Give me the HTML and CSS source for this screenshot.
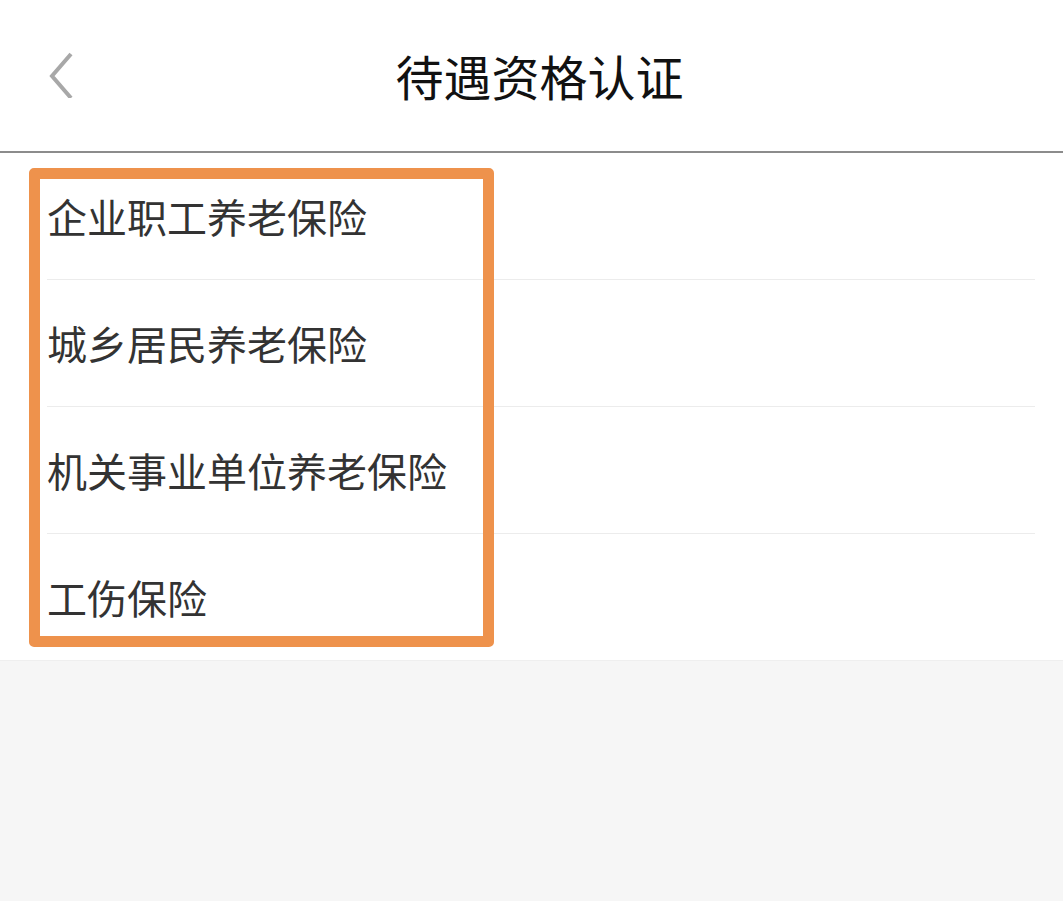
FILE: index.html
```html
<!DOCTYPE html>
<html lang="zh-CN">
<head>
    <meta charset="UTF-8">
    <meta name="viewport" content="width=device-width, initial-scale=1.0">
    <title>待遇资格认证</title>
    <link rel="stylesheet" href="styles.css">
</head>
<body>
    <div class="header">
        <a class="back" href="#">
            <svg width="30" height="48" viewBox="0 0 30 48">
                <polyline points="25,4 6,26 25,48" fill="none" stroke="#a8a8a8" stroke-width="4"/>
            </svg>
        </a>
        <h1>待遇资格认证</h1>
    </div>
    <div class="list">
        <div class="items">
            <div class="item">企业职工养老保险</div>
            <div class="item">城乡居民养老保险</div>
            <div class="item">机关事业单位养老保险</div>
            <div class="item">工伤保险</div>
        </div>
        <div class="highlight"></div>
    </div>
</body>
</html>
```

FILE: styles.css
```css
body {
    margin: 0;
    padding: 0;
    background-color: #f6f6f6;
    font-family: "Noto Sans CJK SC", "Noto Sans", sans-serif;
    height: 901px;
}
.header {
    position: relative;
    height: 151px;
    background-color: #fff;
    border-bottom: 2px solid #8c8c8c;
    display: flex;
    align-items: center;
    justify-content: center;
    padding-left: 16px;
}
.back {
    position: absolute;
    left: 46px;
    top: 50px;
}
.header h1 {
    margin: 0;
    margin-top: -2px;
    font-size: 48px;
    font-weight: normal;
    color: #111;
}
.list {
    position: relative;
    background-color: #fff;
    padding-left: 47px;
    padding-right: 28px;
    border-bottom: 1px solid #efefef;
}
.item {
    height: 126px;
    display: flex;
    align-items: center;
    font-size: 40px;
    color: #333;
    border-bottom: 1px solid #ececec;
}
.item:last-child {
    border-bottom: none;
}
.highlight {
    position: absolute;
    left: 29px;
    top: 15px;
    width: 443px;
    height: 457px;
    border: 11px solid #ee924c;
    border-radius: 5px;
}
```
